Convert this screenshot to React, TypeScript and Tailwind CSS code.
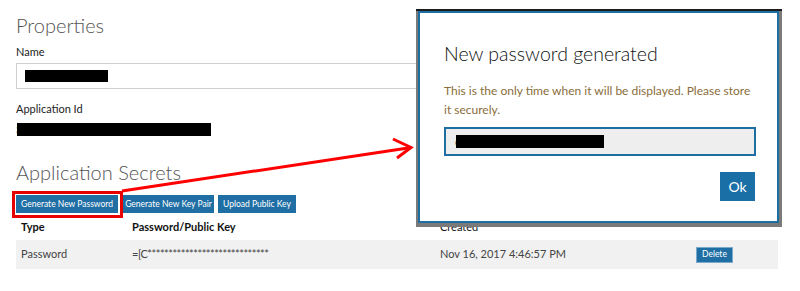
// Azure-portal style "Application Secrets" page with the generated password dialog on top

const font = { fontFamily: 'Lato, "Open Sans", sans-serif' };

const actions = [
	{ label: "Generate New Password", width: "w-[102px]" },
	{ label: "Generate New Key Pair", width: "w-[91px]" },
	{ label: "Upload Public Key", width: "w-[78px]" },
];

function Redacted({ className }: { className: string }) {
	return <div className={`bg-black ${className}`} />;
}

function PasswordDialog() {
	return (
		<div className="absolute left-[416px] top-[9px] w-[366px] h-[218px] bg-[#7a7a7a] border-t-2 border-[#1c1c1c]">
			<div className="w-[361px] h-[212px] ml-[2px] bg-white border-2 border-[#1f6ea3] px-6 pt-[28px]">
				<h2 className="text-[19.5px] leading-[26px] font-light text-[#111]">New password generated</h2>
				<p className="mt-[14px] text-[12px] leading-[19px] text-[#8a6d3b]">
					This is the only time when it will be displayed. Please store it securely.
				</p>
				<div className="mt-[8px] h-[29px] w-[312px] border-2 border-[#1f6ea3] bg-[#eeeeee] flex items-center pl-[9px]">
					<span className="text-[11px] text-[#555] leading-none">c</span>
					<Redacted className="w-[148px] h-[13px] -ml-[4px]" />
				</div>
				<div className="flex justify-end mt-[16px] w-[311px]">
					<button className="w-[35px] h-[29px] bg-[#1a6fa7] text-white text-[14px]">Ok</button>
				</div>
			</div>
		</div>
	);
}

function Arrow() {
	return (
		<svg className="absolute left-0 top-0" width="800" height="291" viewBox="0 0 800 291">
			<line x1="122" y1="191" x2="408" y2="148" stroke="#ff0000" strokeWidth="3" />
			<polyline
				points="393,139 411,147.5 397,158"
				fill="none"
				stroke="#ff0000"
				strokeWidth="3"
				strokeLinejoin="miter"
			/>
		</svg>
	);
}

export default function App() {
	return (
		<div className="relative w-[800px] h-[291px] overflow-hidden bg-white text-[#333]" style={font}>
			<div className="pl-4 pr-[22px] pt-[11px]">
				<h1 className="text-[20px] leading-[28px] font-light text-[#555]">Properties</h1>

				<div className="mt-[5px] text-[11px] leading-[16px] text-[#222]">Name</div>
				<div className="mt-[3px] h-[26px] border border-[#cfcfcf] flex items-center pl-[8px]">
					<Redacted className="w-[83px] h-[12px]" />
				</div>

				<div className="mt-[12px] text-[11px] leading-[16px] text-[#222]">Application Id</div>
				<div className="mt-[5px] flex items-center h-[14px]">
					<span className="text-[11px] leading-none text-[#333]">3</span>
					<Redacted className="w-[194px] h-[13px] -ml-[5px]" />
				</div>

				<h1 className="mt-[22px] text-[20px] leading-[28px] font-light text-[#555]">Application Secrets</h1>

				<div className="mt-[9px] flex items-center gap-[4px] h-[18px]">
					{actions.map(({ label, width }, i) => (
						<div key={label} className={`relative flex ${i === 1 ? "ml-[1px]" : ""}`}>
							<button
								className={`${width} h-[18px] bg-[#1f6fa5] text-white text-[8.5px] leading-none whitespace-nowrap`}
							>
								{label}
							</button>
							{i === 0 && (
								<div className="absolute -left-[4px] -top-[4px] -right-[5px] -bottom-[5px] border-[3px] border-[#e60000]" />
							)}
						</div>
					))}
				</div>

				<div className="mt-[5px] grid grid-cols-[116px_308px_256px_1fr] text-[11px]">
					<div className="pl-[5px] h-[18px] flex items-center font-bold text-[#111]">Type</div>
					<div className="h-[18px] flex items-center font-bold text-[#111]">Password/Public Key</div>
					<div className="h-[18px] flex items-center text-[#111]">Created</div>
					<div />
				</div>
				<div className="mt-[4px] h-[29px] bg-[#f1f1f1] grid grid-cols-[116px_308px_256px_1fr] items-center text-[11px] text-[#444]">
					<div className="pl-[5px]">Password</div>
					<div className="tracking-[-0.5px]">=[C*****************************</div>
					<div>Nov 16, 2017 4:46:57 PM</div>
					<div className="flex">
						<button className="px-[5px] h-[16px] bg-[#1f6fa5] text-white text-[8.5px] leading-none border border-[#7aa9cc]">
							Delete
						</button>
					</div>
				</div>
			</div>

			<Arrow />
			<PasswordDialog />
		</div>
	);
}
